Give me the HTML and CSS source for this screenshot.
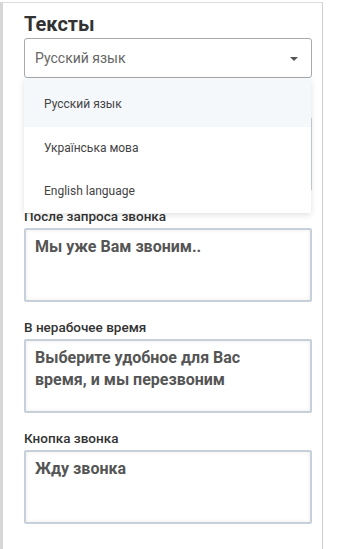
FILE: index.html
```html
<!DOCTYPE html>
<html lang="ru">
<head>
  <meta charset="UTF-8">
  <meta name="viewport" content="width=device-width, initial-scale=1.0">
  <title>Тексты</title>
  <link rel="stylesheet" href="styles.css">
</head>
<body>
  <div class="panel">
    <h2 class="panel-title">Тексты</h2>

    <!-- Выбор языка -->
    <div class="lang-select">
      <div class="select-box">
        <span class="select-value">Русский язык</span>
        <span class="select-arrow"></span>
      </div>
      <ul class="select-menu">
        <li class="select-item active">Русский язык</li>
        <li class="select-item">Українська мова</li>
        <li class="select-item">English language</li>
      </ul>
    </div>

    <!-- Поле под открытым списком -->
    <div class="field">
      <label class="field-label">&nbsp;</label>
      <textarea class="field-input"></textarea>
    </div>

    <div class="field">
      <label class="field-label">После запроса звонка</label>
      <textarea class="field-input">Мы уже Вам звоним..</textarea>
    </div>

    <div class="field">
      <label class="field-label">В нерабочее время</label>
      <textarea class="field-input">Выберите удобное для Вас время, и мы перезвоним</textarea>
    </div>

    <div class="field">
      <label class="field-label">Кнопка звонка</label>
      <textarea class="field-input">Жду звонка</textarea>
    </div>
  </div>
</body>
</html>
```

FILE: styles.css
```css
/* Reset */
* {
  margin: 0;
  padding: 0;
  box-sizing: border-box;
  font-family: Roboto, "Noto Sans", Arial, sans-serif;
}

body {
  background-color: #fff;
}

/* Панель */
.panel {
  width: 323px;
  min-height: 100vh;
  margin-top: 2px;
  padding: 9px 10px 30px 21px;
  border-left: 3px solid #d6d6d6;
  border-top: 1px solid #dcdcdc;
  border-right: 1px solid #cfcfcf;
  background-color: #fff;
}

.panel-title {
  font-size: 20px;
  line-height: 25px;
  font-weight: 700;
  color: #333;
}

/* Селект */
.lang-select {
  position: relative;
  margin-top: 1px;
}

.select-box {
  display: flex;
  align-items: center;
  justify-content: space-between;
  height: 40px;
  padding: 0 13px 0 10px;
  border: 1px solid #a9a9a9;
  border-radius: 3px;
  background-color: #fff;
}

.select-value {
  font-size: 14px;
  color: #666;
}

.select-arrow {
  width: 0;
  height: 0;
  margin-top: 1px;
  border-left: 4px solid transparent;
  border-right: 4px solid transparent;
  border-top: 4px solid #555;
}

.select-menu {
  position: absolute;
  top: 40px;
  left: 0;
  width: 287px;
  z-index: 5;
  list-style: none;
  background-color: #fff;
  box-shadow: 0 2px 6px rgba(0, 0, 0, 0.12);
}

.select-item {
  height: 43px;
  line-height: 43px;
  padding-left: 20px;
  font-size: 12px;
  color: #444;
}

.select-item.active {
  height: 49px;
  line-height: 53px;
  background-color: #f5f8fb;
}

/* Поля */
.field {
  margin-top: 19px;
}

.field + .field {
  margin-top: 17px;
}

.field-label {
  display: block;
  font-size: 13.5px;
  line-height: 16px;
  font-weight: 500;
  color: #333;
}

.field-input {
  display: block;
  width: 288px;
  height: 74px;
  margin-top: 4px;
  padding: 6px 30px 6px 9px;
  border: 2px solid #c7d0d9;
  border-radius: 2px;
  box-shadow: inset 0 0 4px rgba(0, 0, 0, 0.08);
  resize: none;
  outline: none;
  overflow: hidden;
  font-family: Roboto, sans-serif;
  font-size: 16px;
  line-height: 22px;
  font-weight: 700;
  color: #555;
}
```
